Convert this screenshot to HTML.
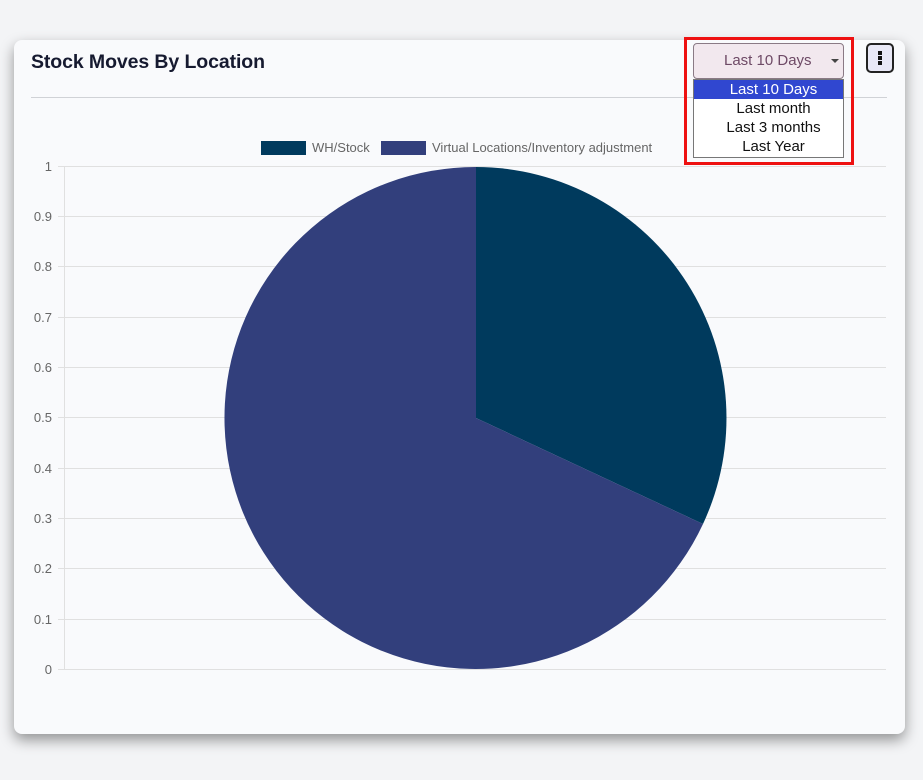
<!DOCTYPE html>
<html><head><meta charset="utf-8"><style>
body{margin:0;width:923px;height:780px;background:#f3f4f6;font-family:"Liberation Sans",sans-serif;position:relative;overflow:hidden}
.card{position:absolute;left:14px;top:40px;width:891px;height:694px;background:#f9fafc;border-radius:8px;box-shadow:0 6px 14px rgba(0,0,0,.4)}
h1{position:absolute;left:31px;top:51px;margin:0;font:bold 19.5px "Liberation Sans",sans-serif;color:#161a30;letter-spacing:-0.1px}
.hr{position:absolute;left:31px;top:97px;width:856px;height:1px;background:#d0d2d6}
.red{position:absolute;left:684px;top:37px;width:164px;height:122px;border:3px solid #ee1111}
.sel{position:absolute;left:693px;top:43px;width:149px;height:34px;border:1px solid #8a7a85;border-radius:4px;background:#f2e8ee;color:#6e4a66;font-size:15px;line-height:34px;text-indent:30px}
.sel:after{content:"";position:absolute;right:4px;top:15px;border:4px solid transparent;border-top:4px solid #444}
.list{position:absolute;left:693px;top:79px;width:149px;height:77px;border:1px solid #777;background:#fff;font-size:15px;line-height:19px;color:#111}
.list div{padding-left:10px;text-align:center}
.list div:first-child{background:#3047d0;color:#fff}
.dots{position:absolute;left:866px;top:43px;width:28px;height:30px;border:2px solid #222;border-radius:5px;background:#e8e8f6;box-sizing:border-box}
.dots i{position:absolute;left:10px;width:4px;height:4px;background:#111}
</style></head><body>
<div class="card"></div>
<h1>Stock Moves By Location</h1>
<div class="hr"></div>
<svg style="position:absolute;left:0;top:0" width="923" height="780" font-family="Liberation Sans" font-size="13" fill="#666">
<g stroke="#e0e0e0" stroke-width="1">
<line x1="58" x2="886" y1="166.5" y2="166.5"/><line x1="58" x2="886" y1="216.5" y2="216.5"/><line x1="58" x2="886" y1="266.5" y2="266.5"/><line x1="58" x2="886" y1="317.5" y2="317.5"/><line x1="58" x2="886" y1="367.5" y2="367.5"/><line x1="58" x2="886" y1="417.5" y2="417.5"/><line x1="58" x2="886" y1="468.5" y2="468.5"/><line x1="58" x2="886" y1="518.5" y2="518.5"/><line x1="58" x2="886" y1="568.5" y2="568.5"/><line x1="58" x2="886" y1="619.5" y2="619.5"/><line x1="58" x2="886" y1="669.5" y2="669.5"/>
<line x1="64.5" x2="64.5" y1="166" y2="669"/>
</g>
<g text-anchor="end">
<text x="52" y="171">1</text><text x="52" y="221">0.9</text><text x="52" y="271">0.8</text><text x="52" y="322">0.7</text><text x="52" y="372">0.6</text><text x="52" y="422">0.5</text><text x="52" y="473">0.4</text><text x="52" y="523">0.3</text><text x="52" y="573">0.2</text><text x="52" y="624">0.1</text><text x="52" y="674">0</text>
</g>
<rect x="261" y="141" width="45" height="14" fill="#003a5d"/><text x="312" y="152">WH/Stock</text>
<rect x="381" y="141" width="45" height="14" fill="#323f7c"/><text x="432" y="152">Virtual Locations/Inventory adjustment</text>
<path d="M476 418 L476 167 A251 251 0 0 1 703 524 Z" fill="#003a5d"/>
<path d="M476 418 L703 524 A251 251 0 1 1 476 167 Z" fill="#323f7c"/>
</svg>
<div class="red"></div>
<div class="sel">Last 10 Days</div>
<div class="list"><div>Last 10 Days</div><div>Last month</div><div>Last 3 months</div><div>Last Year</div></div>
<div class="dots"><i style="top:6px"></i><i style="top:11px"></i><i style="top:16px"></i></div>
</body></html>
